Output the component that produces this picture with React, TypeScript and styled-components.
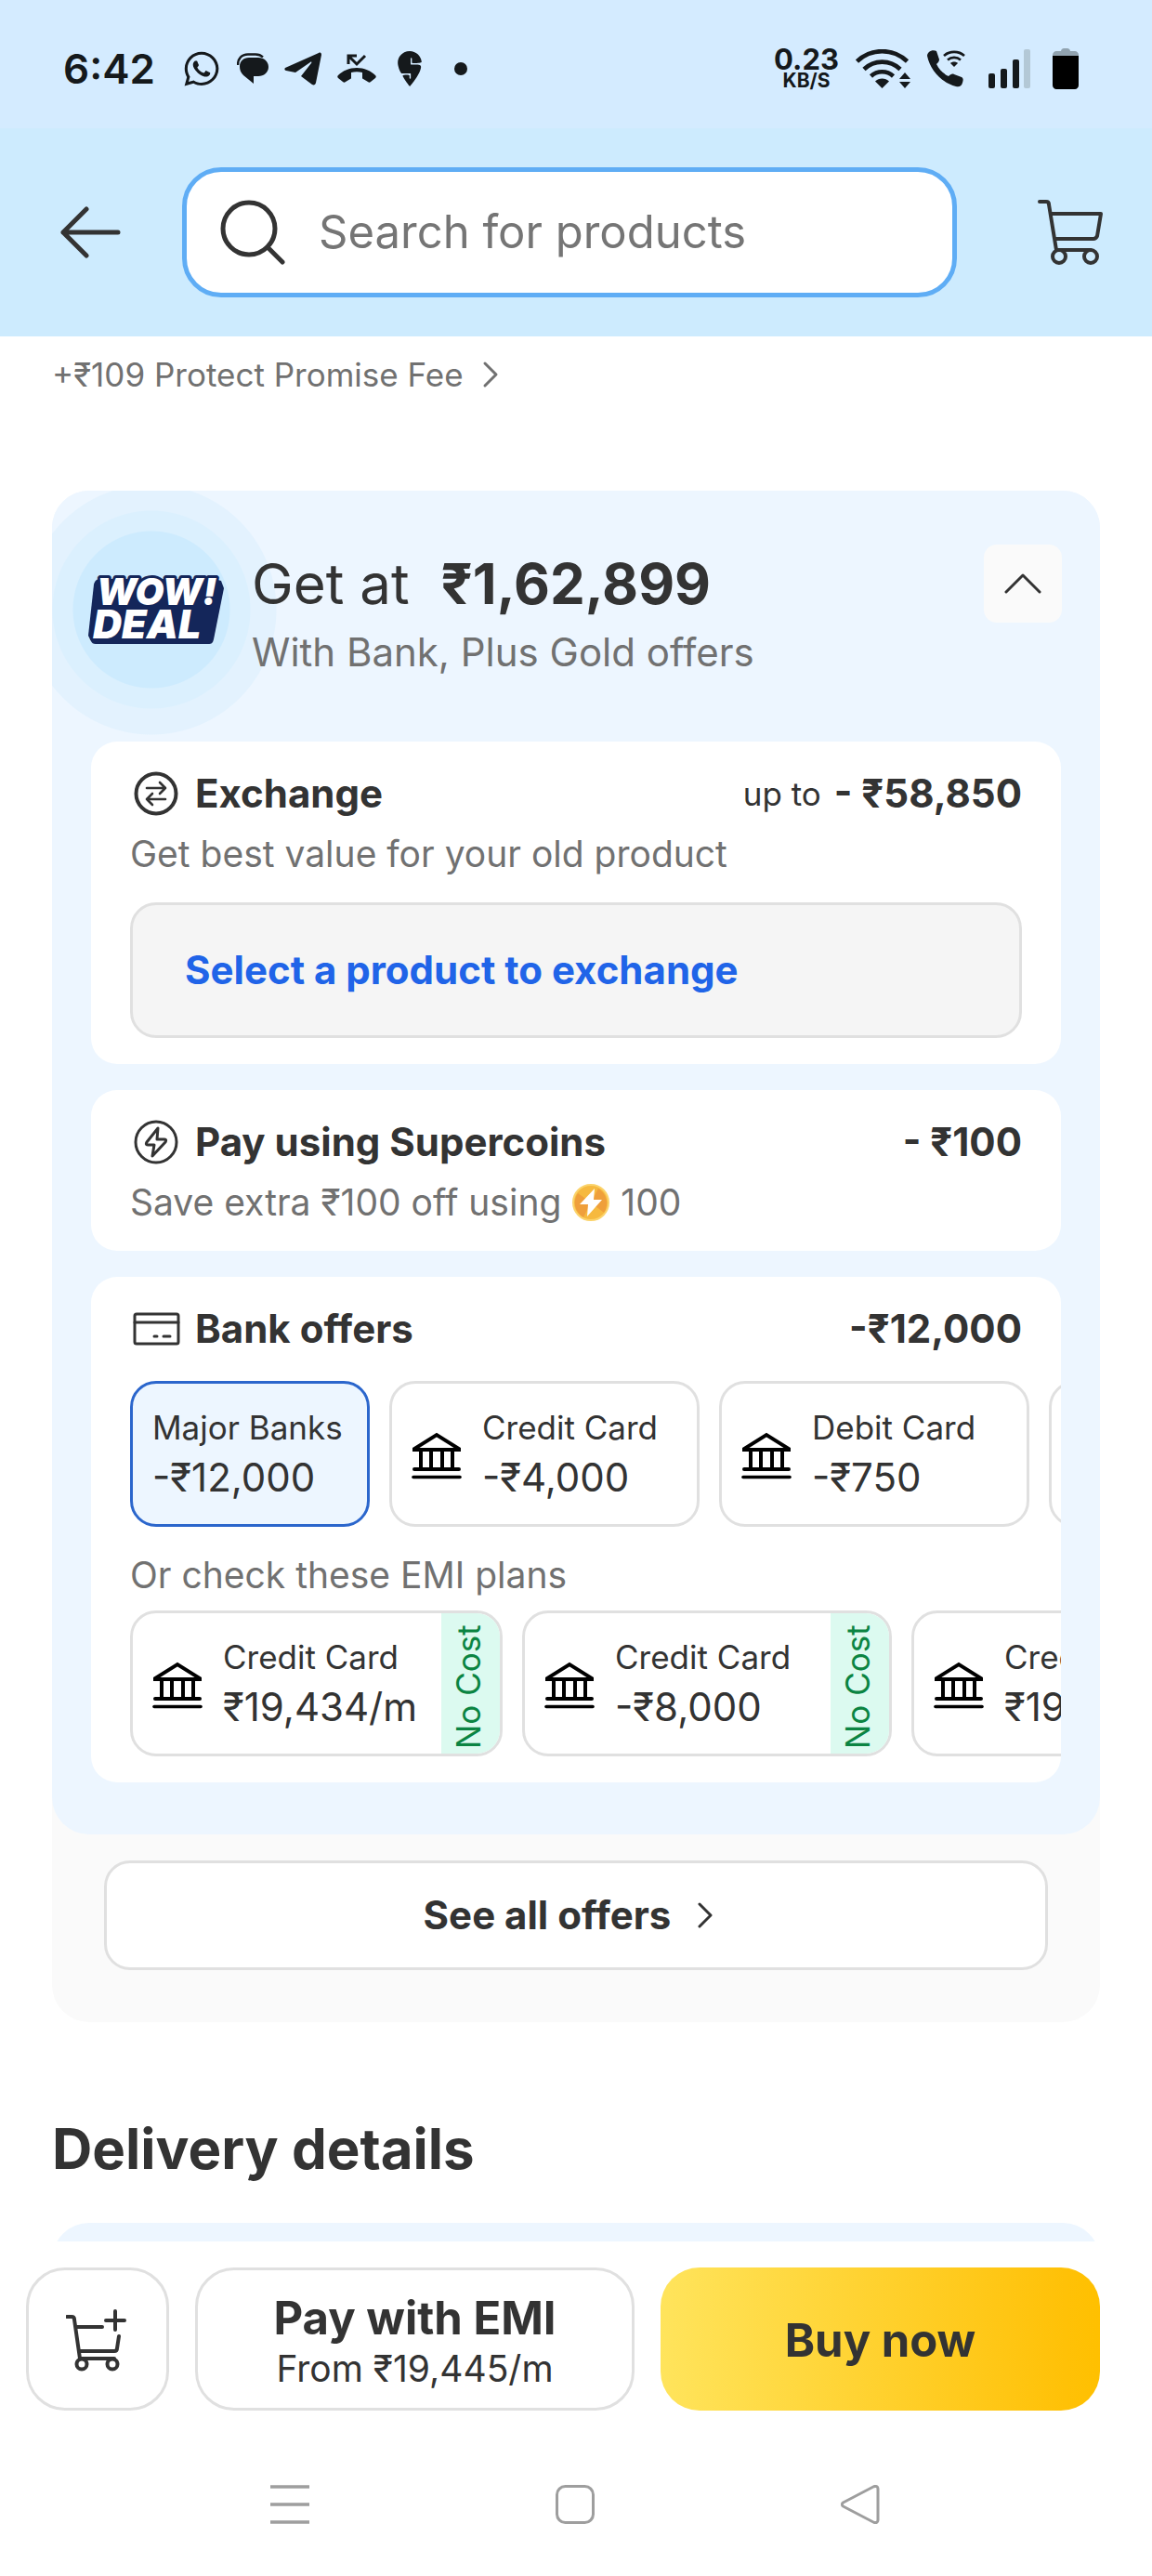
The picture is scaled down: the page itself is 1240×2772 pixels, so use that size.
import React, { useState } from "react";
import styled, { createGlobalStyle, css } from "styled-components";
import { FaWhatsapp } from "react-icons/fa";
import { SiSwiggy } from "react-icons/si";

const ink = "#333333";
const muted = "#717171";
const line = "#e0e0e0";
const panel = "#edf6ff";

const GlobalStyle = createGlobalStyle`
  *, *::before, *::after { box-sizing: border-box; }
  body { margin: 0; background: #fff; }
  body, button, input { font-family: Inter, Roboto, "Noto Sans", sans-serif; color: ${ink}; }
  button { margin: 0; padding: 0; border: 0; background: none; cursor: pointer; text-align: left; }
  h1, h2, p { margin: 0; }
  svg { display: block; flex: none; }
`;

const Screen = styled.div`
  display: flex;
  flex-direction: column;
  height: 100vh;
  background: #fff;
`;

/* ---------- status bar ---------- */

const StatusBar = styled.div`
  display: flex;
  align-items: center;
  justify-content: space-between;
  height: 138px;
  padding: 10px 79px 0 68px;
  background: #d4ebff;
  color: #15191c;
`;

const StatusGroup = styled.div<{ $gap: number }>`
  display: flex;
  align-items: center;
  gap: ${(p) => p.$gap}px;
`;

const Clock = styled.time`
  margin-right: 12px;
  font-size: 44px;
  font-weight: 600;
  line-height: 56px;
`;

const MoreDot = styled.span`
  width: 14px;
  height: 14px;
  margin-left: 12px;
  border-radius: 50%;
  background: currentColor;
`;

const NetSpeed = styled.div`
  display: flex;
  flex-direction: column;
  align-items: center;
  font-size: 31px;
  font-weight: 700;
  line-height: 26px;
`;

const NetUnit = styled.span`
  font-size: 21px;
  line-height: 20px;
`;

/* ---------- header ---------- */

const Header = styled.header`
  display: flex;
  align-items: center;
  padding: 42px 52px 42px 62px;
  background: #cdebfe;
`;

const IconButton = styled.button`
  display: flex;
  align-items: center;
  justify-content: center;
  width: 72px;
  height: 72px;
`;

const SearchBox = styled.label`
  display: flex;
  flex: 1;
  align-items: center;
  gap: 36px;
  min-width: 0;
  height: 140px;
  margin: 0 86px 0 62px;
  padding: 0 36px;
  border: 5px solid #5fadf5;
  border-radius: 42px;
  background: #fff;
`;

const SearchInput = styled.input`
  flex: 1;
  min-width: 0;
  padding: 0;
  border: 0;
  outline: 0;
  background: none;
  font-size: 49px;
  line-height: 60px;
  &::placeholder { color: #757575; opacity: 1; }
`;

/* ---------- scrolling content ---------- */

const Content = styled.main`
  flex: 1;
  min-height: 0;
  padding: 20px 56px 0;
  overflow-y: auto;
  scrollbar-width: none;
`;

const FeeLink = styled.a`
  display: inline-flex;
  align-items: center;
  gap: 20px;
  color: ${muted};
  font-size: 35px;
  line-height: 42px;
  text-decoration: none;
`;

const DealBox = styled.section`
  margin-top: 104px;
  border-radius: 40px;
  background: #fafafa;
`;

const DealPanel = styled.div`
  overflow: hidden;
  border-radius: 40px;
  background: ${panel};
`;

const DealHead = styled.div`
  display: flex;
  align-items: flex-start;
  padding: 58px 41px 70px 39px;
  background: radial-gradient(
    circle at 107px 128px,
    #cdebfe 84px,
    #dbf0fe 85px,
    #dbf0fe 106px,
    #e3f2fe 107px,
    #e3f2fe 134px,
    ${panel} 135px
  );
`;

const DealLogo = styled.svg`
  margin-top: 32px;
`;

const DealText = styled.div`
  flex: 1;
  padding-left: 30px;
`;

const DealTitle = styled.h1`
  display: flex;
  gap: 34px;
  font-size: 60px;
  font-weight: 400;
  line-height: 84px;
`;

const DealPrice = styled.strong`
  font-weight: 700;
`;

const DealNote = styled.p`
  margin-top: 6px;
  color: ${muted};
  font-size: 42px;
  line-height: 52px;
`;

const Toggle = styled.button`
  display: flex;
  align-items: center;
  justify-content: center;
  width: 84px;
  height: 84px;
  border-radius: 14px;
  background: #fafafa;
`;

const Offers = styled.div`
  display: flex;
  flex-direction: column;
  gap: 28px;
  padding: 0 42px 56px;
`;

const OfferCard = styled.section`
  padding: 30px 42px 28px;
  overflow: hidden;
  border-radius: 28px;
  background: #fff;
`;

const OfferHead = styled.div`
  display: flex;
  align-items: center;
  gap: 14px;
  font-size: 42px;
  line-height: 52px;
`;

const OfferTitle = styled.h2`
  flex: 1;
  font-size: 42px;
  font-weight: 700;
`;

const OfferValue = styled.strong`
  font-weight: 700;
`;

const UpTo = styled.span`
  font-size: 35px;
`;

const OfferNote = styled.p`
  display: flex;
  align-items: center;
  gap: 12px;
  margin-top: 15px;
  color: ${muted};
  font-size: 39px;
  line-height: 48px;
`;

const ExchangeButton = styled.button`
  width: 100%;
  margin-top: 28px;
  padding: 44px 56px;
  border: 3px solid ${line};
  border-radius: 28px;
  background: #f5f5f5;
  color: #2064e8;
  font-size: 42px;
  font-weight: 700;
  line-height: 52px;
`;

const ChipRow = styled.div<{ $top: number }>`
  display: flex;
  gap: 21px;
  margin: ${(p) => p.$top}px -42px 0 0;
  overflow-x: auto;
  scrollbar-width: none;
`;

const Chip = styled.button<{ $selected?: boolean; $wide?: boolean }>`
  display: flex;
  flex: none;
  min-width: ${(p) => (p.$wide ? 334 : 258)}px;
  overflow: hidden;
  border: 3px solid ${line};
  border-radius: 28px;
  background: #fff;
  ${(p) =>
    p.$selected &&
    css`
      border-color: #2b66cc;
      background: ${panel};
    `}
`;

const ChipBody = styled.span<{ $wide?: boolean }>`
  display: flex;
  align-items: center;
  gap: 22px;
  min-width: ${(p) => (p.$wide ? 329 : 0)}px;
  padding: 26px 26px 26px 21px;
`;

const ChipText = styled.span`
  display: flex;
  flex-direction: column;
  gap: 9px;
`;

const ChipLabel = styled.span`
  font-size: 35px;
  line-height: 42px;
`;

const ChipValue = styled.span`
  font-size: 42px;
  line-height: 48px;
`;

/* Rotated half a turn, so its bottom and left padding show at the top and right. */
const NoCost = styled.span`
  display: flex;
  align-items: center;
  justify-content: center;
  align-self: stretch;
  width: 63px;
  padding: 0 0 8px 6px;
  background: #dcfaf0;
  color: #0b8442;
  font-size: 35px;
  line-height: 42px;
  writing-mode: vertical-rl;
  transform: rotate(180deg);
`;

const EmiNote = styled.p`
  margin-top: 28px;
  color: ${muted};
  font-size: 39px;
  line-height: 48px;
`;

const DealFooter = styled.div`
  padding: 28px 56px 56px;
`;

const SeeAll = styled.button`
  display: flex;
  align-items: center;
  justify-content: center;
  gap: 28px;
  width: 100%;
  padding: 30px 16px 30px 0;
  border: 3px solid ${line};
  border-radius: 28px;
  background: #fff;
  font-size: 42px;
  font-weight: 700;
  line-height: 52px;
`;

const SectionTitle = styled.h2`
  margin: 100px 0 44px;
  font-size: 60px;
  font-weight: 700;
  line-height: 72px;
`;

const DeliveryCard = styled.section`
  min-height: 160px;
  border-radius: 40px;
  background: ${panel};
`;

/* ---------- bottom bars ---------- */

const ActionBar = styled.div`
  display: flex;
  gap: 28px;
  padding: 28px 56px 28px 28px;
  background: #fff;
`;

const ActionButton = styled.button<{ $kind: "icon" | "plain" | "primary" }>`
  display: flex;
  flex: ${(p) => (p.$kind === "icon" ? "0 0 154px" : "1 1 200px")};
  flex-direction: column;
  align-items: center;
  justify-content: center;
  height: 154px;
  padding-top: 4px;
  border: ${(p) => (p.$kind === "primary" ? "0" : `3px solid ${line}`)};
  border-radius: 42px;
  background: ${(p) => (p.$kind === "primary" ? "linear-gradient(90deg, #ffe45c, #ffc107 92%, #ffc000)" : "#fff")};
  font-size: 49px;
  font-weight: 700;
  line-height: 60px;
`;

const ActionNote = styled.span`
  font-size: 39px;
  font-weight: 400;
  line-height: 48px;
`;

const NavBar = styled.nav`
  display: grid;
  grid-template-columns: repeat(3, 1fr);
  justify-items: center;
  padding: 52px 160px 56px 158px;
  background: #fff;
`;

/* ---------- icons ---------- */

const stroke = (width: number, color = ink) => ({
  fill: "none",
  stroke: color,
  strokeWidth: width,
  strokeLinecap: "round" as const,
  strokeLinejoin: "round" as const,
});

const MessageIcon = () => (
  <svg width="34" height="34" viewBox="0 0 34 34">
    <path d="M1 13C1 6 5 1.500 12 1.500h8c4 0 6 1 8 3" fill="none" stroke="currentColor" strokeWidth="2.400" />
    <path d="M13 5h10c6 0 11 4 11 10s-5 10-11 10h-5v8L7 24c-3-3-4-6-4-9.500C3 9 7 5 13 5z" fill="currentColor" />
  </svg>
);

const TelegramIcon = () => (
  <svg width="40" height="36" viewBox="0 0 40 36">
    <path d="M1 17 37 1c2-1 3 0 3 2l-6 30c-.5 2-2 3-4 2L18 26l11-14c1-1 0-2-1-1L12 22 2 20c-2-.5-2-2-1-3z" fill="currentColor" />
  </svg>
);

const MissedCallIcon = () => (
  <svg width="42" height="34" viewBox="0 0 42 34">
    <path d="m30 3-9 9-8-8M12 12V3h9" fill="none" stroke="currentColor" strokeWidth="3" />
    <path d="M21 16c8 0 15 3 20 8 1 1 1 2 0 3l-5 4c-1 1-2 1-3 0l-5-3c-1 0-1-1-1-2v-5c-4-1-8-1-12 0v5c0 1 0 2-1 2l-5 3c-1 1-2 1-3 0l-5-4c-1-1-1-2 0-3 5-5 12-8 20-8z" fill="currentColor" />
  </svg>
);

const WifiIcon = () => (
  <svg width="59" height="42" viewBox="0 0 59 42">
    <g {...stroke(4.6, "#15191c")} strokeLinecap="butt">
      <path d="M1.500 13a39 39 0 0 1 54 0M9 21.500a28 28 0 0 1 39 0M16.500 29a17.500 17.500 0 0 1 24 0" />
    </g>
    <path d="M28.500 42 21 34.500c4-4 11-4 15 0z" fill="#15191c" />
    <path d="m47 32 6-7 6 7zM47 35h12l-6 7z" fill="#15191c" />
  </svg>
);

const WifiCallIcon = () => (
  <svg width="42" height="40" viewBox="0 0 42 40">
    <path d="M2 2c2-2 6-2 8-1l3 9c0 2-1 3-3 5 3 6 7 10 13 13 2-2 4-3 6-2l8 3c2 1 2 3 1 6-1 4-4 5-7 4C15 35 3 21 0 6c0-2 1-3 2-4z" fill="#15191c" />
    <path d="M18 6c6-5.500 16-5.500 22 0M22 10.500c4-3.500 10-3.500 14 0" fill="none" stroke="#15191c" strokeWidth="2.600" />
    <path d="m29 18-4-4c2-2 6-2 8 0z" fill="#15191c" />
  </svg>
);

const SignalIcon = () => (
  <svg width="45" height="42" viewBox="0 0 45 42" fill="#15191c">
    <rect y="26" width="7" height="16" rx="2" />
    <rect x="13" y="21" width="7" height="21" rx="2" />
    <rect x="26" y="11" width="7" height="31" rx="2" />
    <rect x="38" width="7" height="42" rx="2" fill="#b3c8d6" />
  </svg>
);

const BatteryIcon = () => (
  <svg width="28" height="44" viewBox="0 0 28 44">
    <path d="M0 9V7c0-2 2-4 4-4h5c0-2 2-3 3-3h4c1 0 3 1 3 3h5c2 0 4 2 4 4v2z" fill="#91a3b0" />
    <path d="M0 8h28v32c0 2-2 4-4 4H4c-2 0-4-2-4-4z" fill="#000" />
  </svg>
);

const BackIcon = () => (
  <svg width="66" height="56" viewBox="0 0 66 56" {...stroke(5)}>
    <path d="M3 28h59M28 3 3 28l25 25" />
  </svg>
);

const SearchIcon = () => (
  <svg width="70" height="70" viewBox="0 0 70 70" {...stroke(5)}>
    <circle cx="31" cy="31" r="28" />
    <path d="m51 51 16 16" />
  </svg>
);

const CartIcon = () => (
  <svg width="72" height="72" viewBox="0 0 72 72" {...stroke(4)}>
    <path d="M3 3h7c2 0 3 1 3 3l8 49h37M15 16h54l-4 24c-1 2-2 3-4 3H19" />
    <circle cx="24" cy="62" r="7" />
    <circle cx="58" cy="62" r="7" />
  </svg>
);

const CartPlusIcon = () => (
  <svg width="68" height="68" viewBox="0 0 68 68" {...stroke(4)}>
    <path d="M1 8h5c2 0 3 1 3 3l6 42h37M11 19h28M57 29l-2 13c0 2-1 3-3 3H14M53 2v20M43 12h20" />
    <circle cx="17" cy="59" r="5.500" />
    <circle cx="50" cy="59" r="5.500" />
  </svg>
);

const ChevronRight = ({ color = ink }: { color?: string }) => (
  <svg width="18" height="30" viewBox="0 0 18 30" {...stroke(3, color)}>
    <path d="m3 3 12 12L3 27" />
  </svg>
);

const ChevronUp = ({ open }: { open: boolean }) => (
  <svg width="40" height="24" viewBox="0 0 40 24" {...stroke(3)}>
    <path d={open ? "M2 21 20 3l18 18" : "M2 3l18 18L38 3"} />
  </svg>
);

const ExchangeIcon = () => (
  <svg width="56" height="52" viewBox="0 0 56 52" {...stroke(4)}>
    <circle cx="28" cy="26" r="21.500" />
    <path d="M18 20h20m-6-6 6 6-6 6M38 32H18m6-6-6 6 6 6" strokeWidth="2.600" />
  </svg>
);

const SupercoinIcon = () => (
  <svg width="56" height="52" viewBox="0 0 56 52" {...stroke(3)}>
    <circle cx="28" cy="26" r="22" />
    <path d="M30 11 18 26c-1 2-1 3 1 3h7l-2 12 14-15c1-2 1-3-1-3h-8z" />
  </svg>
);

const CardIcon = () => (
  <svg width="56" height="52" viewBox="0 0 56 52" {...stroke(3)}>
    <rect x="5" y="10" width="47" height="32" rx="2" />
    <path d="M5 19h47M26 34h3M36 34h7" />
  </svg>
);

const CoinIcon = () => (
  <svg width="40" height="40" viewBox="0 0 40 40">
    <circle cx="20" cy="20" r="19" fill="#f6b93f" stroke="#fbd36b" strokeWidth="2" />
    <path d="M28 5a18 18 0 0 1 6 26L20 20zM6 10a18 18 0 0 0 6 26l8-16z" fill="#ef9f3b" />
    <path d="M24 5 8 22h9l-1 13 16-18h-9z" fill="#fff" />
  </svg>
);

const BankIcon = () => (
  <svg width="54" height="54" viewBox="0 0 54 54" {...stroke(4, "#000")} strokeLinejoin="miter">
    <path d="M3 22v-1L27 6l24 15v1zM10 23v20M21 23v20M33 23v20M44 23v20M3 43h48" />
    <path d="M2 51.500h50" strokeWidth="3.600" />
  </svg>
);

const WowDealLogo = () => (
  <DealLogo width="146" height="76" viewBox="0 0 146 76" role="img" aria-label="Wow! Deal">
    <path d="M13 5h123l7 2 3 8-11 55c-1 4-2 5-6 5H8c-3 0-4-1-5-3l-3-6L6 11c1-4 3-6 7-6z" fill="#14265a" />
    <g
      fill="#fff"
      fontFamily="Inter, sans-serif"
      fontWeight="900"
      fontStyle="italic"
      stroke="#14265a"
      strokeWidth="6"
      strokeLinejoin="round"
      paintOrder="stroke"
    >
      <text x="5" y="69" fontSize="43">DEAL</text>
      <text x="9" y="33" fontSize="40">WOW!</text>
    </g>
  </DealLogo>
);

/* ---------- page ---------- */

type Offer = { label: string; value: string; bank?: boolean };

const bankOffers: Offer[] = [
  { label: "Major Banks", value: "-₹12,000" },
  { label: "Credit Card", value: "-₹4,000", bank: true },
  { label: "Debit Card", value: "-₹750", bank: true },
];

const emiPlans: Offer[] = [
  { label: "Credit Card", value: "₹19,434/m", bank: true },
  { label: "Credit Card", value: "-₹8,000", bank: true },
  { label: "Credit Card", value: "₹19,434/m", bank: true },
];

const OfferContent = ({ offer, wide }: { offer: Offer; wide?: boolean }) => (
  <ChipBody $wide={wide}>
    {offer.bank && <BankIcon />}
    <ChipText>
      <ChipLabel>{offer.label}</ChipLabel>
      <ChipValue>{offer.value}</ChipValue>
    </ChipText>
  </ChipBody>
);

export default function App() {
  const [open, setOpen] = useState(true);
  const [selected, setSelected] = useState(0);

  return (
    <Screen>
      <GlobalStyle />
      <StatusBar>
        <StatusGroup $gap={17}>
          <Clock>6:42</Clock>
          <FaWhatsapp size={42} />
          <MessageIcon />
          <TelegramIcon />
          <MissedCallIcon />
          <SiSwiggy size={38} />
          <MoreDot />
        </StatusGroup>
        <StatusGroup $gap={24}>
          <StatusGroup $gap={18}>
            <NetSpeed>
              0.23
              <NetUnit>KB/S</NetUnit>
            </NetSpeed>
            <WifiIcon />
            <WifiCallIcon />
          </StatusGroup>
          <SignalIcon />
          <BatteryIcon />
        </StatusGroup>
      </StatusBar>

      <Header>
        <IconButton aria-label="Back">
          <BackIcon />
        </IconButton>
        <SearchBox>
          <SearchIcon />
          <SearchInput type="text" placeholder="Search for products" aria-label="Search for products" />
        </SearchBox>
        <IconButton aria-label="Cart">
          <CartIcon />
        </IconButton>
      </Header>

      <Content>
        <FeeLink href="#fee">
          +₹109 Protect Promise Fee
          <ChevronRight color={muted} />
        </FeeLink>

        <DealBox>
          <DealPanel>
            <DealHead>
              <WowDealLogo />
              <DealText>
                <DealTitle>
                  Get at <DealPrice>₹1,62,899</DealPrice>
                </DealTitle>
                <DealNote>With Bank, Plus Gold offers</DealNote>
              </DealText>
              <Toggle aria-label="Toggle offers" aria-expanded={open} onClick={() => setOpen(!open)}>
                <ChevronUp open={open} />
              </Toggle>
            </DealHead>

            {open && (
              <Offers>
                <OfferCard>
                  <OfferHead>
                    <ExchangeIcon />
                    <OfferTitle>Exchange</OfferTitle>
                    <UpTo>up to</UpTo>
                    <OfferValue>- ₹58,850</OfferValue>
                  </OfferHead>
                  <OfferNote>Get best value for your old product</OfferNote>
                  <ExchangeButton>Select a product to exchange</ExchangeButton>
                </OfferCard>

                <OfferCard>
                  <OfferHead>
                    <SupercoinIcon />
                    <OfferTitle>Pay using Supercoins</OfferTitle>
                    <OfferValue>- ₹100</OfferValue>
                  </OfferHead>
                  <OfferNote>
                    Save extra ₹100 off using <CoinIcon /> 100
                  </OfferNote>
                </OfferCard>

                <OfferCard>
                  <OfferHead>
                    <CardIcon />
                    <OfferTitle>Bank offers</OfferTitle>
                    <OfferValue>-₹12,000</OfferValue>
                  </OfferHead>
                  <ChipRow $top={30}>
                    {bankOffers.map((offer, i) => (
                      <Chip
                        key={offer.label}
                        $selected={selected === i}
                        $wide={offer.bank}
                        aria-pressed={selected === i}
                        onClick={() => setSelected(i)}
                      >
                        <OfferContent offer={offer} />
                      </Chip>
                    ))}
                    <Chip aria-label="More bank offers" />
                  </ChipRow>
                  <EmiNote>Or check these EMI plans</EmiNote>
                  <ChipRow $top={14}>
                    {emiPlans.map((offer, i) => (
                      <Chip key={i}>
                        <OfferContent offer={offer} wide />
                        <NoCost>No Cost</NoCost>
                      </Chip>
                    ))}
                  </ChipRow>
                </OfferCard>
              </Offers>
            )}
          </DealPanel>
          <DealFooter>
            <SeeAll>
              See all offers
              <ChevronRight />
            </SeeAll>
          </DealFooter>
        </DealBox>

        <SectionTitle>Delivery details</SectionTitle>
        <DeliveryCard />
      </Content>

      <ActionBar>
        <ActionButton $kind="icon" aria-label="Add to cart">
          <CartPlusIcon />
        </ActionButton>
        <ActionButton $kind="plain">
          Pay with EMI
          <ActionNote>From ₹19,445/m</ActionNote>
        </ActionButton>
        <ActionButton $kind="primary">Buy now</ActionButton>
      </ActionBar>

      <NavBar>
        <button aria-label="Recent apps">
          <svg width="42" height="42" viewBox="0 0 42 42">
            <path d="M0 2h42M0 21h42M0 40h42" stroke="#9e9e9e" strokeWidth="3.600" />
          </svg>
        </button>
        <button aria-label="Home">
          <svg width="42" height="42" viewBox="0 0 42 42">
            <rect x="1.500" y="1.500" width="39" height="39" rx="9" fill="none" stroke="#9e9e9e" strokeWidth="3" />
          </svg>
        </button>
        <button aria-label="Go back">
          <svg width="42" height="42" viewBox="0 0 42 42" {...stroke(3, "#9e9e9e")}>
            <path d="M2.500 19 35 2c3-1.500 5 0 5 2v34c0 2-2 3.500-5 2L2.500 23c-1.500-1-1.500-3 0-4z" />
          </svg>
        </button>
      </NavBar>
    </Screen>
  );
}
